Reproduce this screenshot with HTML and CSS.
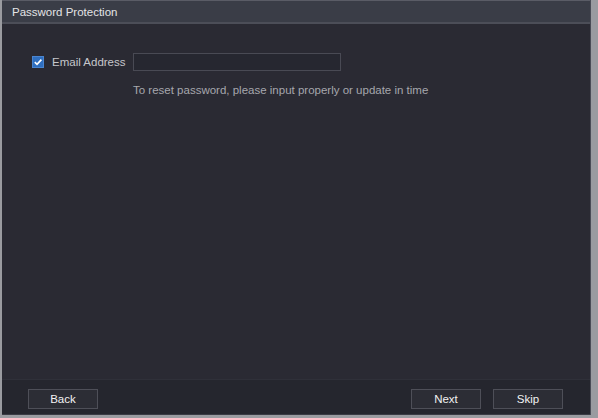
FILE: index.html
```html
<!DOCTYPE html>
<html lang="en">
<head>
  <meta charset="UTF-8" />
  <meta name="viewport" content="width=device-width, initial-scale=1.0" />
  <title>Password Protection</title>
  <link rel="stylesheet" href="styles.css">
</head>
<body>
  <div class="dialog">
    <div class="titlebar">Password Protection</div>

    <div class="content">
      <div class="row">
        <span class="check">
          <svg width="10" height="10" viewBox="0 0 10 10">
            <path d="M1.8 5.2 L4 7.3 L8.4 2.6" fill="none" stroke="#fff" stroke-width="1.7"/>
          </svg>
        </span>
        <label class="label">Email Address</label>
        <input class="field" type="text" />
      </div>
      <p class="hint">To reset password, please input properly or update in time</p>
    </div>

    <div class="footer">
      <button class="btn">Back</button>
      <div class="right">
        <button class="btn">Next</button>
        <button class="btn">Skip</button>
      </div>
    </div>
  </div>
</body>
</html>
```

FILE: styles.css
```css
body {
  margin: 0;
  padding: 0;
  width: 598px;
  height: 418px;
  background: #9a9ba0;
  font-family: "Liberation Sans", Arial, sans-serif;
  overflow: hidden;
}

.dialog {
  width: 589px;
  height: 415px;
  margin-left: 2px;
  background: #2a2a33;
  display: flex;
  flex-direction: column;
  border-right: 1px solid #4a4c56;
  box-sizing: border-box;
}

.titlebar {
  height: 24px;
  box-sizing: border-box;
  background: #3a3d47;
  border-top: 1px solid #5a5c66;
  border-bottom: 2px solid #4c4e58;
  color: #e4e4e6;
  font-size: 11.5px;
  line-height: 22px;
  padding-left: 10px;
}

.content {
  flex: 1;
  padding-top: 29px;
}

.row {
  display: flex;
  align-items: center;
  height: 18px;
}

.check {
  width: 12px;
  height: 12px;
  margin-left: 30px;
  background: #2f6fc0;
  border: 1px solid #4a85d0;
  display: flex;
  align-items: center;
  justify-content: center;
  box-sizing: border-box;
}

.check svg {
  display: block;
}

.label {
  color: #c6c7cc;
  font-size: 11.5px;
  margin-left: 8px;
  width: 81px;
}

.field {
  width: 208px;
  height: 18px;
  box-sizing: border-box;
  margin: 0;
  background: #262730;
  border: 1px solid #494a54;
  outline: none;
}

.hint {
  margin: 13px 0 0 131px;
  color: #a6a7ad;
  font-size: 11.5px;
}

.footer {
  height: 36px;
  background: #25262e;
  border-top: 1px solid #2f3039;
  border-bottom: 1px solid #3a3b44;
  display: flex;
  align-items: center;
  justify-content: space-between;
  padding: 3px 27px 0 26px;
  box-sizing: border-box;
}

.right {
  display: flex;
  gap: 12px;
}

.btn {
  width: 70px;
  height: 20px;
  padding: 0;
  background: #2c2d35;
  border: 1px solid #4e4f58;
  color: #f2f2f2;
  font-family: "Liberation Sans", Arial, sans-serif;
  font-size: 11.5px;
  line-height: 18px;
}
```
